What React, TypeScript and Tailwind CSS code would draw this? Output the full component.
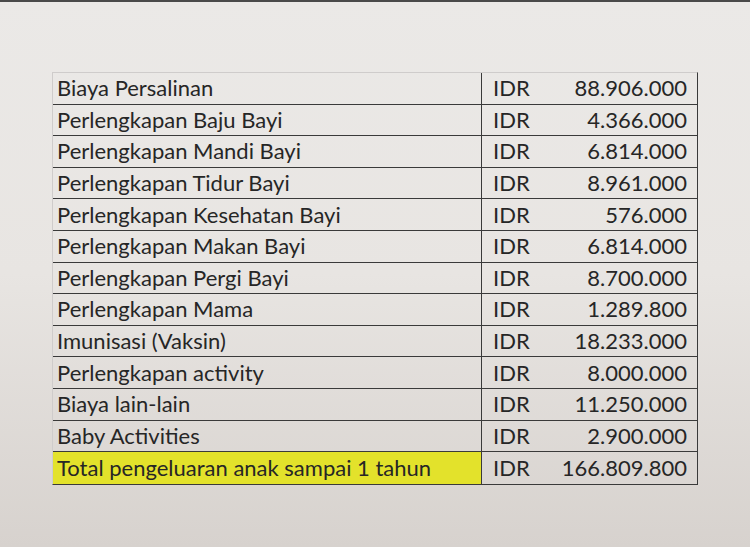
const rows: [string, string][] = [
  ["Biaya Persalinan", "88.906.000"],
  ["Perlengkapan Baju Bayi", "4.366.000"],
  ["Perlengkapan Mandi Bayi", "6.814.000"],
  ["Perlengkapan Tidur Bayi", "8.961.000"],
  ["Perlengkapan Kesehatan Bayi", "576.000"],
  ["Perlengkapan Makan Bayi", "6.814.000"],
  ["Perlengkapan Pergi Bayi", "8.700.000"],
  ["Perlengkapan Mama", "1.289.800"],
  ["Imunisasi (Vaksin)", "18.233.000"],
  ["Perlengkapan activity", "8.000.000"],
  ["Biaya lain-lain", "11.250.000"],
  ["Baby Activities", "2.900.000"],
];

const App = () => {
  return (
    <div
      className="w-[750px] h-[547px] border-t-2 border-[#4a4a4a] bg-gradient-to-b from-[#ebe9e7] via-[#e8e5e2] to-[#d7d2ce] pt-[70px] pl-[52px] text-[#262626]"
      style={{ fontFamily: "Lato, 'Open Sans', sans-serif" }}
    >
      <div className="w-[646px] border-t border-l border-t-[#cfcccb] border-l-[#cfcccb] border-r border-r-[#3a3a3a] border-b border-b-[#3a3a3a]">
        {rows.map(([label, amount]) => (
          <div key={label} className="flex h-[31.6px] border-b border-[#3a3a3a] text-[22px] leading-none">
            <div className="w-[429px] flex items-center pl-[4px] border-r border-[#3a3a3a]">{label}</div>
            <div className="flex-1 flex items-center justify-between pl-[11px] pr-[10px]">
              <span>IDR</span>
              <span>{amount}</span>
            </div>
          </div>
        ))}
        <div className="flex h-[31.6px] text-[22px] leading-none">
          <div className="w-[429px] flex items-center pl-[4px] border-r border-[#3a3a3a] bg-[#e3e22b]">
            Total pengeluaran anak sampai 1 tahun
          </div>
          <div className="flex-1 flex items-center justify-between pl-[11px] pr-[10px]">
            <span>IDR</span>
            <span>166.809.800</span>
          </div>
        </div>
      </div>
    </div>
  );
};

export default App;
